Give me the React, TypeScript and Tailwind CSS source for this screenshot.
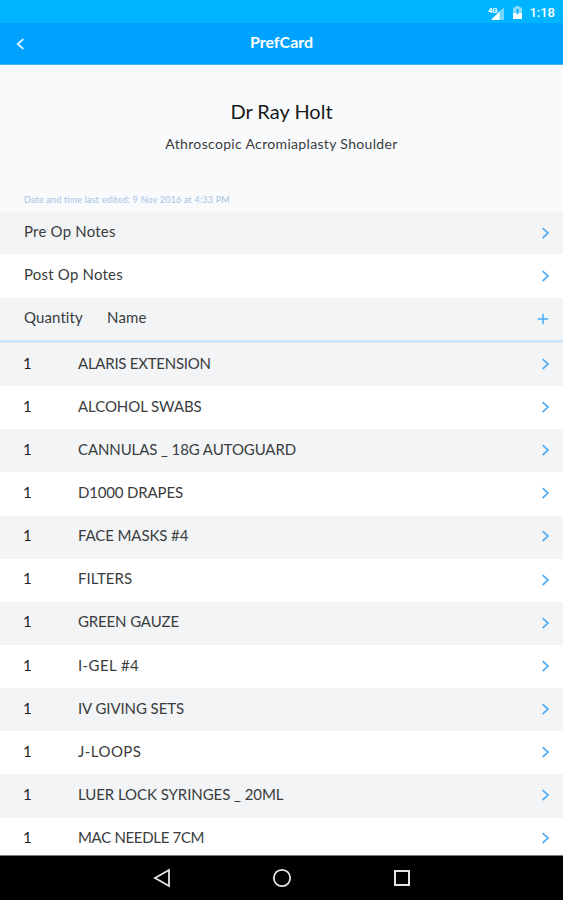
import React from 'react';

const NOTES = [
  { label: 'Pre Op Notes', rowClass: 'h-[42px] bg-[#f2f4f6]' },
  { label: 'Post Op Notes', rowClass: 'h-[43.5px] bg-white' },
];

const ITEMS = [
  { name: 'ALARIS EXTENSION', quantity: 1, tracking: 'tracking-[-0.25px]' },
  { name: 'ALCOHOL SWABS', quantity: 1, tracking: 'tracking-[-0.08px]' },
  { name: 'CANNULAS _ 18G AUTOGUARD', quantity: 1, tracking: 'tracking-[-0.1px]' },
  { name: 'D1000 DRAPES', quantity: 1, tracking: 'tracking-[-0.16px]' },
  { name: 'FACE MASKS #4', quantity: 1, tracking: 'tracking-[-0.1px]' },
  { name: 'FILTERS', quantity: 1, tracking: 'tracking-normal' },
  { name: 'GREEN GAUZE', quantity: 1, tracking: 'tracking-[-0.14px]' },
  { name: 'I-GEL #4', quantity: 1, tracking: 'tracking-[0.4px]' },
  { name: 'IV GIVING SETS', quantity: 1, tracking: 'tracking-[-0.08px]' },
  { name: 'J-LOOPS', quantity: 1, tracking: 'tracking-[0.45px]' },
  { name: 'LUER LOCK SYRINGES _ 20ML', quantity: 1, tracking: 'tracking-[-0.06px]' },
  { name: 'MAC NEEDLE 7CM', quantity: 1, tracking: 'tracking-[-0.32px]' },
];

export default function App() {
  return (
    <div className="flex h-screen w-full flex-col overflow-hidden bg-white font-['Lato',sans-serif] text-[15px] text-[#3a3c3e]">
      <StatusBar />

      <header className="grid h-[42px] shrink-0 grid-cols-[60px_1fr_60px] items-center border-b border-[#45b5fb] bg-[#00a2ff] text-white">
        <button type="button" aria-label="Back" className="pl-[15.5px]">
          <svg width="9" height="12" viewBox="0 0 9 12" fill="none" stroke="#d5f1ff" strokeWidth="1.9">
            <path d="M7.3 1 1.8 6l5.5 5" />
          </svg>
        </button>
        <h1 className="pb-[3px] text-center text-[16px] leading-5 font-bold">PrefCard</h1>
      </header>

      <section className="flex h-[147px] shrink-0 flex-col items-center bg-[#f8fafc]">
        <h2 className="mt-[34px] text-[20px] leading-6 text-[#18191a]">Dr Ray Holt</h2>
        <p className="mt-[11px] text-[14px] leading-5 tracking-[0.33px]">Athroscopic Acromiaplasty Shoulder</p>
        <p className="mt-auto mb-[6px] self-start pl-6 text-[9px] leading-3 tracking-[0.19px] text-[#a6c2e3]">
          Date and time last edited: 9 Nov 2016 at 4:33 PM
        </p>
      </section>

      <main className="min-h-0 flex-1 overflow-hidden">
        {NOTES.map((note) => (
          <div
            key={note.label}
            className={`flex items-center justify-between pr-[13px] pl-6 ${note.rowClass}`}
          >
            <span className="pb-[3px] tracking-[0.2px]">{note.label}</span>
            <Chevron />
          </div>
        ))}

        <div className="flex h-[45.5px] items-center border-b-[3px] border-[#cde4f7] bg-[#f2f4f6] pr-[14px] pl-6">
          <span className="w-[83px] pb-[3px] tracking-[0.1px]">Quantity</span>
          <span className="pb-[3px] tracking-[0.2px]">Name</span>
          <svg className="ml-auto" width="12" height="12" viewBox="0 0 12 12" stroke="#4aa9f3" strokeWidth="1.5">
            <path d="M6 .8v10.4M.8 6h10.4" />
          </svg>
        </div>

        {ITEMS.map((item) => (
          <div
            key={item.name}
            className="flex h-[43.15px] items-center pr-[13px] pb-[1.5px] pl-6 odd:bg-white even:bg-[#f2f4f6]"
          >
            <span className="-ml-px w-[55px] pb-[2px] text-[#222]">{item.quantity}</span>
            <span className={`pb-[2px] ${item.tracking}`}>{item.name}</span>
            <Chevron />
          </div>
        ))}
      </main>

      <NavigationBar />
    </div>
  );
}

function Chevron() {
  return (
    <svg
      className="ml-auto shrink-0"
      width="9"
      height="12"
      viewBox="0 0 9 12"
      fill="none"
      stroke="#55adf4"
      strokeWidth="1.7"
    >
      <path d="m1.6 1.2 5.4 4.9-5.4 4.9" />
    </svg>
  );
}

function StatusBar() {
  return (
    <div className="flex h-[23px] shrink-0 items-center justify-end bg-[#00b5ff] pt-0.5 pr-2 text-white">
      <svg width="19" height="16" viewBox="0 0 19 16">
        <path d="M17 2v13H4z" fill="#75d6ff" />
        <path d="M12.5 6.5V15H4z" fill="#fff" />
        <text x="1" y="8" fill="#fff" fontSize="7.5" fontWeight="700" fontFamily="Roboto, sans-serif">
          4G
        </text>
      </svg>
      <svg className="ml-1.5" width="11" height="15" viewBox="0 0 11 15">
        <path d="M3.5 1h4v1.5H10V14H1V2.5h2.5z" fill="#8bdcff" />
        <path d="M1 8h2.5l2 2.5 2-2.500H10v6H1z" fill="#fff" />
        <path d="M5.5 4v4" stroke="#00b5ff" strokeWidth="2" />
      </svg>
      <span className="ml-1.5 font-['Roboto',sans-serif] text-[13px] leading-5 font-medium">1:18</span>
    </div>
  );
}

function NavigationBar() {
  return (
    <nav className="grid h-[45px] shrink-0 grid-cols-[120px_120px_120px] items-center justify-center justify-items-center border-t border-[#777] bg-black">
      <svg width="18" height="20" viewBox="0 0 18 20" fill="none" stroke="#e4e4e4" strokeWidth="1.8">
        <path d="M16 2v16L2 10z" />
      </svg>
      <svg width="20" height="20" viewBox="0 0 20 20" fill="none" stroke="#e4e4e4" strokeWidth="1.8">
        <circle cx="10" cy="10" r="8.2" />
      </svg>
      <svg width="18" height="18" viewBox="0 0 18 18" fill="none" stroke="#e4e4e4" strokeWidth="2">
        <path d="M2 2h14v14H2z" />
      </svg>
    </nav>
  );
}
